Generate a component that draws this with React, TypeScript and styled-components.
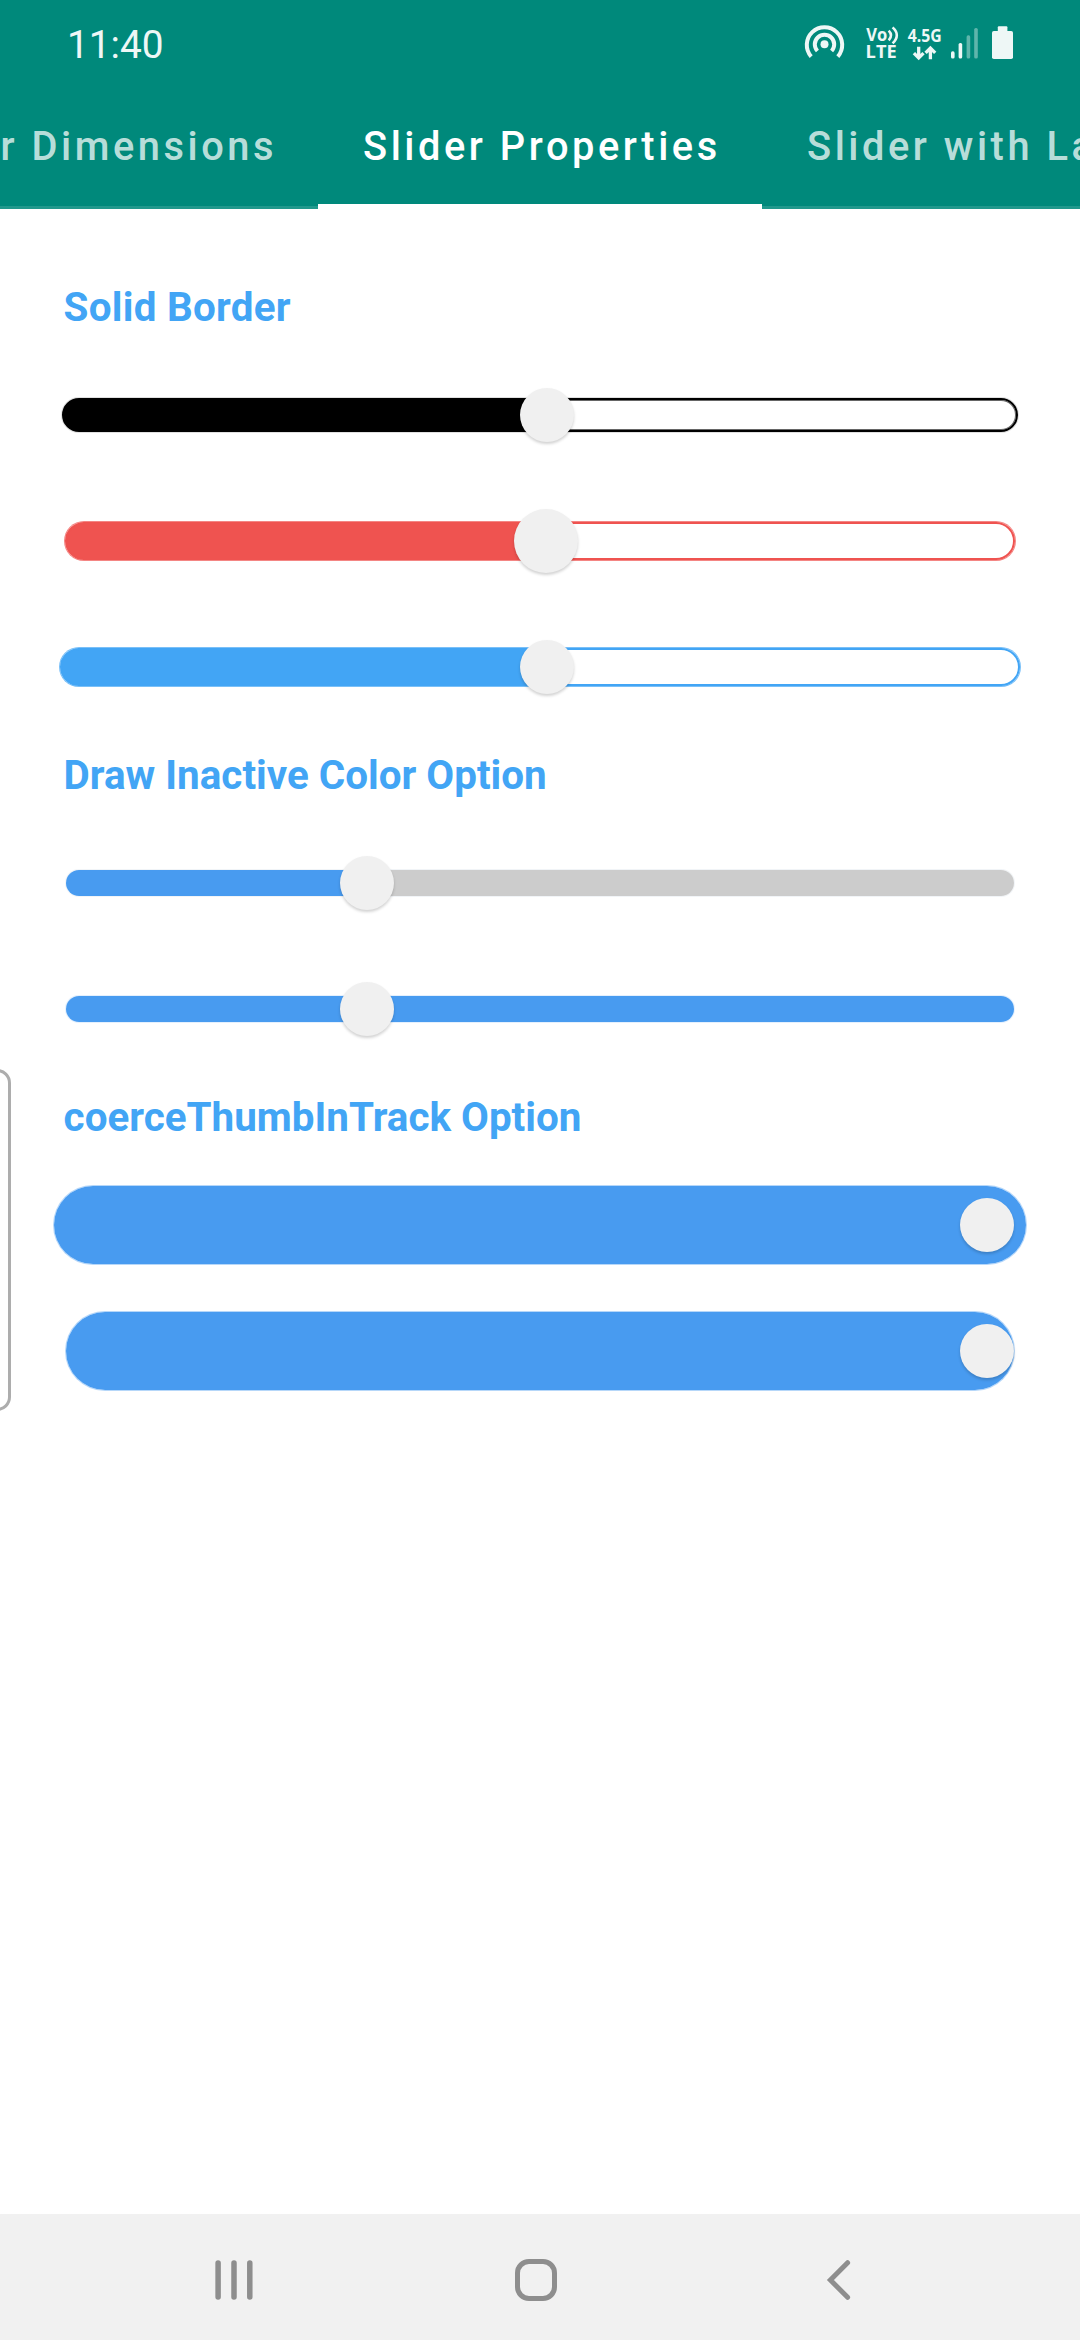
import React from "react";
import styled, { createGlobalStyle } from "styled-components";

const GlobalStyle = createGlobalStyle`
  *, *::before, *::after { box-sizing: border-box; }
  body { margin: 0; background: #fff; font-family: Roboto, "Noto Sans", sans-serif; }
`;

const Screen = styled.div`
  position: relative;
  display: flex;
  flex-direction: column;
  width: 1080px;
  height: 2340px;
  overflow: hidden;
  background: #fff;
`;

const Header = styled.header`
  display: flex;
  flex-direction: column;
  height: 209px;
  background: #00897b;
`;

const StatusBar = styled.div`
  display: flex;
  align-items: center;
  height: 84px;
  padding: 4px 67px 0 67px;
  color: #eef7f6;
`;

const Clock = styled.time`
  flex: 1;
  padding-top: 2px;
  font-size: 38.8px;
  line-height: 46px;
`;

const StatusIcon = styled.svg<{ $gap?: number }>`
  display: block;
  flex: none;
  height: 40px;
  margin-left: ${(p) => p.$gap ?? 0}px;
  overflow: visible;
`;

const TabRow = styled.nav`
  display: flex;
  height: 125px;
`;

const Tab = styled.div<{ $active?: boolean; $width?: number; $alignEnd?: boolean }>`
  flex: ${(p) => (p.$width ? `0 0 ${p.$width}px` : "1 1 0")};
  display: flex;
  align-items: center;
  justify-content: ${(p) => (p.$alignEnd ? "flex-end" : "flex-start")};
  min-width: 0;
  padding: 0 0 0 45px;
  padding-right: ${(p) => (p.$alignEnd ? 41 : 0)}px;
  overflow: hidden;
  color: ${(p) => (p.$active ? "#fff" : "rgba(255, 255, 255, 0.74)")};
  font-size: 39.8px;
  font-weight: 500;
  letter-spacing: 3.54px;
  line-height: 47px;
  white-space: nowrap;
  box-shadow: ${(p) =>
    p.$active ? "inset 0 -5px 0 #fff" : "inset 0 -3px 0 rgba(255, 255, 255, 0.13)"};
`;

const Content = styled.main`
  flex: 1;
  display: flex;
  flex-direction: column;
  padding-top: 53px;
`;

const Heading = styled.h2<{ $tracking?: number }>`
  display: flex;
  align-items: center;
  height: 90px;
  margin: 0;
  padding: 2px 0 0 63.6px;
  color: #42a5f5;
  font-size: 40.4px;
  font-weight: 700;
  letter-spacing: ${(p) => p.$tracking ?? 0}px;
  line-height: 48px;
`;

const SliderRow = styled.div<{ $inset: number }>`
  position: relative;
  display: flex;
  align-items: center;
  height: 126px;
  padding: 0 ${(p) => p.$inset}px;
`;

interface TrackProps {
  $height: number;
  $color: string;
  $rest: string;
  $fill: number;
  $outlined?: boolean;
  $edge: string;
  $innerEdge?: string;
}

const Track = styled.div<TrackProps>`
  flex: 1;
  height: ${(p) => p.$height}px;
  border: ${(p) => (p.$outlined ? `2px solid ${p.$color}` : "0")};
  border-radius: ${(p) => p.$height / 2}px;
  background: linear-gradient(
      to right,
      ${(p) => p.$color} ${(p) => p.$fill}%,
      ${(p) => p.$rest} ${(p) => p.$fill}%
    )
    border-box;
  box-shadow: 0 0 0 1px ${(p) => p.$edge}
    ${(p) => (p.$innerEdge ? `, inset 0 0 0 1px ${p.$innerEdge}` : "")};
`;

const Thumb = styled.div<{ $size: number; $value: number }>`
  position: absolute;
  top: 50%;
  left: calc(93px + ${(p) => p.$value} * 894px);
  width: ${(p) => p.$size}px;
  height: ${(p) => p.$size}px;
  margin: ${(p) => -p.$size / 2}px 0 0 ${(p) => -p.$size / 2}px;
  border-radius: 50%;
  background: #f0f0f0;
  box-shadow: 0 2px 3px rgba(0, 0, 0, 0.18);
`;

const EdgeHandle = styled.div`
  position: absolute;
  top: 1069px;
  left: -20px;
  width: 31px;
  height: 342px;
  border: 3px solid #adadad;
  border-radius: 14px;
`;

const NavBar = styled.footer`
  display: flex;
  align-items: center;
  gap: 261px;
  height: 126px;
  padding: 6px 0 0 214px;
  background: #f1f1f1;
  color: #8e8e8e;
`;

const NavIcon = styled.svg<{ $stroke?: number }>`
  display: block;
  flex: none;
  height: 42px;
  fill: none;
  stroke: currentColor;
  stroke-width: ${(p) => p.$stroke ?? 5};
`;

const IconText = styled.text`
  fill: currentColor;
  font-family: "Open Sans", "Noto Sans", sans-serif;
  font-size: 17.8px;
  font-weight: 700;
`;

interface SliderProps {
  inset: number;
  height: number;
  color: string;
  value: number;
  edge: string;
  rest?: string;
  outlined?: boolean;
  innerEdge?: string;
  thumbSize?: number;
}

function Slider({
  inset,
  height,
  color,
  value,
  edge,
  rest = "#fff",
  outlined,
  innerEdge,
  thumbSize = 54,
}: SliderProps) {
  const fill = value >= 1 ? 100 : value * 100;
  return (
    <SliderRow $inset={inset}>
      <Track
        $height={height}
        $color={color}
        $rest={rest}
        $fill={fill}
        $outlined={outlined}
        $edge={edge}
        $innerEdge={innerEdge}
      />
      <Thumb $size={thumbSize} $value={value} />
    </SliderRow>
  );
}

const HotspotIcon = () => (
  <StatusIcon width="39" viewBox="0 0 39 40" fill="none" stroke="currentColor" strokeWidth="4">
    <path d="M6.2 32.6A17.7 17.7 0 1 1 32.8 32.6" />
    <path d="M12.4 27A9.7 9.7 0 1 1 26.6 27" />
    <circle cx="19.5" cy="20.3" r="4" fill="currentColor" stroke="none" />
  </StatusIcon>
);

const VolteIcon = () => (
  <StatusIcon $gap={22} width="33" viewBox="0 0 33 40">
    <IconText x="0.3" y="16.5" textLength="21" lengthAdjust="spacingAndGlyphs">
      Vo
    </IconText>
    <path
      d="M22.7 6.6Q27.3 11.3 22.7 16.4M26.6 3.4Q35 11 26.6 19.4"
      fill="none"
      stroke="currentColor"
      strokeWidth="2.6"
    />
    <IconText x="-0.4" y="34" textLength="31" lengthAdjust="spacingAndGlyphs">
      LTE
    </IconText>
  </StatusIcon>
);

const NetworkIcon = () => (
  <StatusIcon $gap={9} width="34" viewBox="0 0 34 40">
    <IconText x="-0.2" y="17.6" textLength="34" lengthAdjust="spacingAndGlyphs">
      4.5G
    </IconText>
    <path
      d="M10.7 22.8V34M5.9 29.2L10.7 34L15.5 29.2M22.4 35.2V24M17.6 28.8L22.4 24L27.2 28.8"
      fill="none"
      stroke="currentColor"
      strokeWidth="3.3"
    />
  </StatusIcon>
);

const SignalIcon = () => (
  <StatusIcon $gap={9} width="27" viewBox="0 0 27 40" fill="currentColor">
    <rect x="0" y="27.3" width="3.6" height="7.2" rx="1.6" />
    <rect x="7.6" y="19" width="3.6" height="15.5" rx="1.6" />
    <rect x="15.6" y="11.3" width="3.6" height="23.2" rx="1.6" opacity="0.4" />
    <rect x="23.2" y="4" width="3.6" height="30.5" rx="1.6" opacity="0.4" />
  </StatusIcon>
);

const BatteryIcon = () => (
  <StatusIcon $gap={14} width="21" viewBox="0 0 21 40" fill="currentColor">
    <rect x="5.8" y="2.3" width="9.6" height="7" rx="1" />
    <rect x="0" y="7" width="21" height="28" rx="1.8" />
  </StatusIcon>
);

const BLUE = "#489bf0";
const BLUE_EDGE = "rgba(72, 155, 240, 0.4)";

export default function App() {
  return (
    <Screen>
      <GlobalStyle />
      <Header>
        <StatusBar>
          <Clock>11:40</Clock>
          <HotspotIcon />
          <VolteIcon />
          <NetworkIcon />
          <SignalIcon />
          <BatteryIcon />
        </StatusBar>
        <TabRow>
          <Tab $width={318} $alignEnd>
            Slider Dimensions
          </Tab>
          <Tab $width={444} $active>
            Slider Properties
          </Tab>
          <Tab>Slider with Labels</Tab>
        </TabRow>
      </Header>

      <Content>
        <Heading $tracking={0.25}>Solid Border</Heading>
        <Slider
          inset={62}
          height={34}
          color="#000"
          value={0.508}
          outlined
          edge="rgba(0, 0, 0, 0.12)"
          innerEdge="rgba(0, 0, 0, 0.6)"
        />
        <Slider
          inset={65}
          height={38}
          color="#ef5350"
          value={0.507}
          outlined
          edge="rgba(239, 83, 80, 0.7)"
          thumbSize={64}
        />
        <Slider
          inset={60}
          height={38}
          color="#42a5f5"
          value={0.508}
          outlined
          edge="rgba(66, 165, 245, 0.7)"
        />

        <Heading>Draw Inactive Color Option</Heading>
        <Slider
          inset={66}
          height={26}
          color={BLUE}
          rest="#ccc"
          value={0.306}
          edge="rgba(160, 180, 200, 0.15)"
        />
        <Slider
          inset={66}
          height={26}
          color={BLUE}
          rest={BLUE}
          value={0.306}
          edge="rgba(72, 155, 240, 0.15)"
        />

        <Heading>coerceThumbInTrack Option</Heading>
        <Slider inset={54} height={78} color={BLUE} value={1} edge={BLUE_EDGE} />
        <Slider inset={66} height={78} color={BLUE} value={1} edge={BLUE_EDGE} />
      </Content>

      <EdgeHandle />

      <NavBar>
        <NavIcon $stroke={5.5} width="40" viewBox="0 0 40 42" strokeLinecap="round">
          <path d="M4.1 3.9V38.1M20 3.9V38.1M35.8 3.9V38.1" />
        </NavIcon>
        <NavIcon width="42" viewBox="0 0 42 42">
          <rect x="2.5" y="2.5" width="37" height="37" rx="11.5" />
        </NavIcon>
        <NavIcon width="36" viewBox="0 0 36 42" strokeLinecap="round">
          <path d="M29.6 3.7L12.4 21L29.6 38.3" />
        </NavIcon>
      </NavBar>
    </Screen>
  );
}
